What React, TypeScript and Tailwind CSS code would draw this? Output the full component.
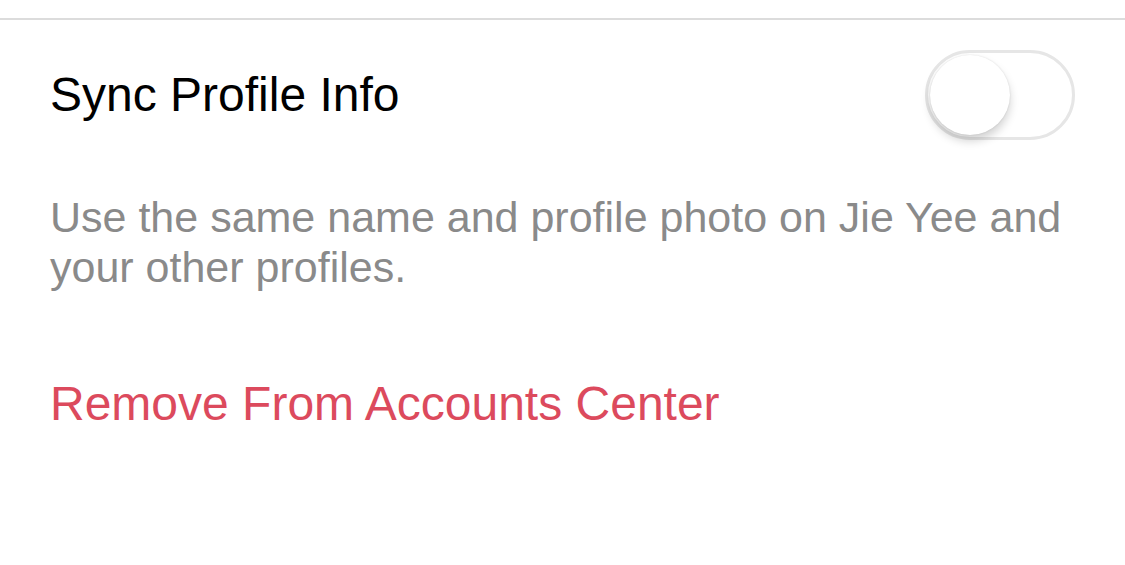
export default function App() {
  return (
    <div className="w-[1125px] h-[565px] bg-white overflow-hidden" style={{ fontFamily: '"Liberation Sans", Arial, sans-serif' }}>
      <div className="h-[18px]" />
      <div className="h-[2px] bg-[#dcdcdc]" />
      <div className="flex items-center justify-between pl-[50px] pr-[50px] pt-[30px]">
        <span className="text-[48px] leading-[56px] text-black">Sync Profile Info</span>
        <button
          type="button"
          className="relative w-[150px] h-[90px] rounded-full border-[3px] border-[#e6e6e6] bg-white"
        >
          <span className="absolute left-[2px] top-[2px] w-[80px] h-[80px] rounded-full bg-white shadow-[0_6px_10px_rgba(0,0,0,0.18),0_0_2px_rgba(0,0,0,0.12)]" />
        </button>
      </div>
      <p className="mt-[52px] pl-[50px] pr-[50px] text-[43px] leading-[50px] text-[#8a8a8a]">
        Use the same name and profile photo on Jie Yee and your other profiles.
      </p>
      <div className="mt-[84px] pl-[50px] text-[48px] leading-[56px] text-[#dc4a5d]">Remove From Accounts Center</div>
    </div>
  )
}
